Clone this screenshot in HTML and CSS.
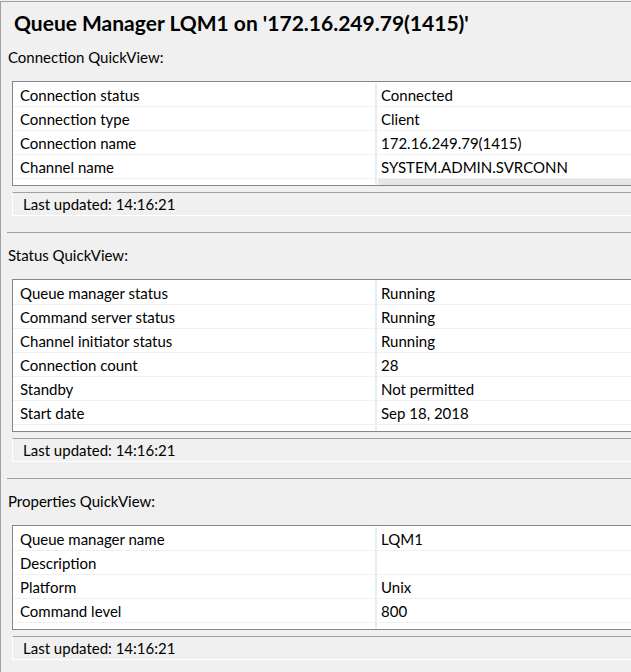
FILE: index.html
```html
<!DOCTYPE html>
<html>
<head>
<meta charset="utf-8">
<link rel="stylesheet" href="styles.css">
</head>
<body>
<div class="frame">
  <h1 class="title">Queue Manager LQM1 on '172.16.249.79(1415)'</h1>

  <div class="section first">
    <div class="section-label">Connection QuickView:</div>
    <div class="table">
      <div class="row"><div class="k">Connection status</div><div class="v">Connected</div></div>
      <div class="row"><div class="k">Connection type</div><div class="v">Client</div></div>
      <div class="row"><div class="k">Connection name</div><div class="v">172.16.249.79(1415)</div></div>
      <div class="row"><div class="k">Channel name</div><div class="v">SYSTEM.ADMIN.SVRCONN</div></div>
      <div class="filler"><div class="k"></div><div class="v"></div></div>
    </div>
    <div class="updated">Last updated: 14:16:21</div>
  </div>

  <div class="section">
    <div class="section-label">Status QuickView:</div>
    <div class="table">
      <div class="row"><div class="k">Queue manager status</div><div class="v">Running</div></div>
      <div class="row"><div class="k">Command server status</div><div class="v">Running</div></div>
      <div class="row"><div class="k">Channel initiator status</div><div class="v">Running</div></div>
      <div class="row"><div class="k">Connection count</div><div class="v">28</div></div>
      <div class="row"><div class="k">Standby</div><div class="v">Not permitted</div></div>
      <div class="row"><div class="k">Start date</div><div class="v">Sep 18, 2018</div></div>
      <div class="filler plain"><div class="k"></div><div class="v"></div></div>
    </div>
    <div class="updated">Last updated: 14:16:21</div>
  </div>

  <div class="section">
    <div class="section-label">Properties QuickView:</div>
    <div class="table">
      <div class="row"><div class="k">Queue manager name</div><div class="v">LQM1</div></div>
      <div class="row"><div class="k">Description</div><div class="v"></div></div>
      <div class="row"><div class="k">Platform</div><div class="v">Unix</div></div>
      <div class="row"><div class="k">Command level</div><div class="v">800</div></div>
      <div class="filler plain"><div class="k"></div><div class="v"></div></div>
    </div>
    <div class="updated">Last updated: 14:16:21</div>
  </div>
</div>
</body>
</html>
```

FILE: styles.css
```css
html, body {
  margin: 0;
  padding: 0;
  background: #f0f0f0;
  overflow: hidden;
  height: 100%;
}

body {
  padding-top: 1px;
  box-sizing: border-box;
  font-family: "Lato", "Open Sans", sans-serif;
  font-size: 15px;
  color: #000;
}

.frame {
  height: 100%;
  box-sizing: border-box;
  overflow: hidden;
  border-top: 1px solid #a0a0a0;
  border-left: 1px solid #a0a0a0;
  background: #f0f0f0;
}

.title {
  margin: 0;
  padding: 8px 0 0 13px;
  font-size: 21px;
  line-height: 26px;
  font-weight: bold;
  white-space: nowrap;
}

.section {
  border-top: 1px solid #a0a0a0;
  margin-left: 6px;
  margin-top: 16px;
  padding-top: 12px;
}

.section.first {
  border-top: none;
  margin-top: 11px;
  padding-top: 0;
}

.section-label {
  padding-left: 1px;
  line-height: 20px;
  margin-bottom: 14px;
}

.table {
  margin-left: 5px;
  border: 1px solid #828790;
  border-right: none;
  padding-top: 1px;
  background: #fff;
}

.row {
  display: flex;
  height: 23px;
  border-bottom: 1px solid #f0f0f0;
}

.k {
  width: 355px;
  padding-left: 7px;
  padding-top: 1px;
  line-height: 22px;
  flex: none;
}

.v {
  flex: 1;
  border-left: 2px solid #e8edf4;
  padding-left: 4px;
  padding-top: 1px;
  line-height: 22px;
  white-space: nowrap;
}

.filler {
  display: flex;
  height: 6px;
}

.filler .k,
.filler .v {
  padding-top: 0;
  line-height: 6px;
}

.filler .v {
  background: linear-gradient(to right, #fff 0, #fff 1px, #e6e6e6 1px);
}

.filler.plain .v {
  background: #fff;
}

.updated {
  margin-top: 6px;
  margin-left: 5px;
  height: 22px;
  line-height: 22px;
  border-top: 1px solid #a0a0a0;
  border-left: 1px solid #fff;
  border-bottom: 1px solid #fff;
  padding-left: 10px;
  background: #f0f0f0;
}
```
